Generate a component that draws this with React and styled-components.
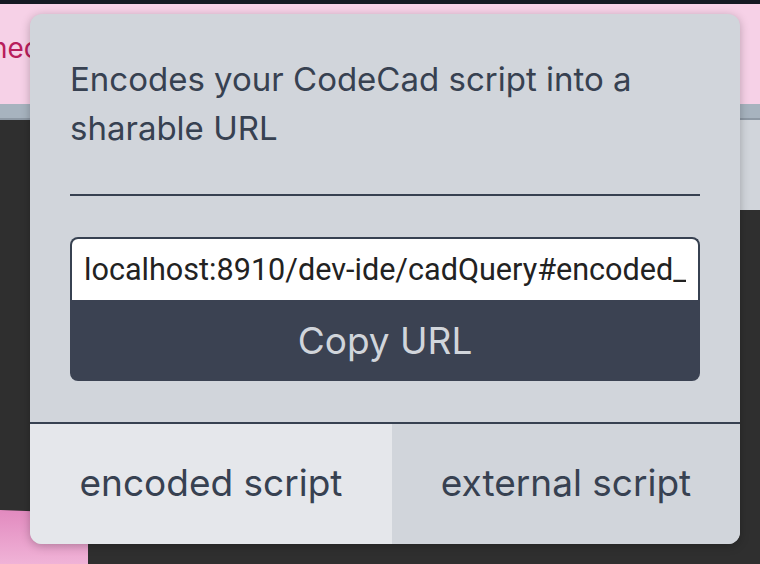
import styled, { createGlobalStyle } from "styled-components";

const GlobalStyle = createGlobalStyle`
  html, body {
    margin: 0;
    padding: 0;
    background: #2f2f2f;
  }
  * {
    box-sizing: border-box;
  }
`;

const Page = styled.div`
  width: 760px;
  height: 564px;
  position: relative;
  overflow: hidden;
  display: flex;
  flex-direction: column;
  background: #2f2f2f;
  font-family: Inter, "Noto Sans", sans-serif;
`;

const TopStrip = styled.div`
  height: 4px;
  background: #141923;
`;

const Header = styled.div`
  height: 100px;
  background: #f6d1e7;
  display: flex;
  align-items: center;
  overflow: hidden;
`;

const HeaderTitle = styled.h1`
  margin: 0 0 12px -9px;
  font-size: 28px;
  font-weight: 400;
  color: #b91d5c;
  white-space: nowrap;
`;

const Toolbar = styled.div`
  height: 16px;
  background: #a7b3bf;
  border-bottom: 2px solid #8d98a4;
`;

const Main = styled.div`
  flex: 1;
  position: relative;
  display: flex;
  justify-content: flex-end;
  align-items: flex-start;
`;

const SidePanel = styled.div`
  width: 60px;
  height: 90px;
  background: #d1d5db;
  display: flex;
  flex-direction: column;
  align-items: flex-start;
  padding: 18px 0 0 35px;
  gap: 16px;
`;

const Dot = styled.span`
  width: 5px;
  height: 6px;
  border-radius: 50%;
  background: #6b7280;
`;

const Blob = styled.div`
  position: absolute;
  left: 0;
  bottom: 0;
  width: 88px;
  height: 54px;
  background: linear-gradient(180deg, #e28abf 0%, #f0b3d7 100%);
  clip-path: polygon(0 0, 60% 2px, 100% 5px, 100% 100%, 0 100%);
`;

const Popover = styled.div`
  position: absolute;
  left: 30px;
  top: 14px;
  width: 710px;
  height: 530px;
  background: #d1d5db;
  border-radius: 12px;
  overflow: hidden;
  box-shadow: 0 2px 10px rgba(0, 0, 0, 0.25);
  display: flex;
  flex-direction: column;
  color: #374151;
`;

const Body = styled.div`
  padding: 41px 40px;
  display: flex;
  flex-direction: column;
  gap: 41px;
  border-bottom: 2px solid #374151;
`;

const Description = styled.p`
  margin: 0;
  font-size: 33px;
  line-height: 49px;
  height: 98px;
`;

const Rule = styled.hr`
  margin: 0;
  border: none;
  height: 2px;
  background: #374151;
`;

const UrlGroup = styled.div`
  display: flex;
  flex-direction: column;
`;

const UrlInput = styled.input`
  height: 63px;
  margin: 0;
  padding: 0 12px 0 12px;
  border: 2px solid #374151;
  border-bottom: none;
  border-radius: 8px 8px 0 0;
  background: #fff;
  font-family: Roboto, "Noto Sans", sans-serif;
  font-size: 30.6px;
  color: #222;
  outline: none;
`;

const CopyButton = styled.button`
  height: 81px;
  margin: 0;
  border: none;
  border-radius: 0 0 8px 8px;
  background: #3b4252;
  color: #d1d5db;
  font-family: Inter, "Noto Sans", sans-serif;
  font-size: 37px;
  cursor: pointer;
`;

const Tabs = styled.div`
  flex: 1;
  display: flex;
`;

const Tab = styled.button`
  flex: 1 1 auto;
  margin: 0;
  border: none;
  padding: 0 0 4px;
  background: ${(p) => (p.$active ? "#e5e7eb" : "#d1d5db")};
  color: #374151;
  font-family: Inter, "Noto Sans", sans-serif;
  font-size: 37px;
  cursor: pointer;
`;

export default function App() {
  return (
    <>
      <GlobalStyle />
      <Page>
        <TopStrip />
        <Header>
          <HeaderTitle>necessary</HeaderTitle>
        </Header>
        <Toolbar />
        <Main>
          <SidePanel>
            <Dot />
            <Dot />
            <Dot />
          </SidePanel>
          <Blob />
        </Main>
        <Popover>
          <Body>
            <Description>Encodes your CodeCad script into a sharable URL</Description>
            <Rule />
            <UrlGroup>
              <UrlInput
                readOnly
                value="localhost:8910/dev-ide/cadQuery#encoded_script=eJyNkMFqwzAMhu9+ChNTqVcyjRrg=="
              />
              <CopyButton>Copy URL</CopyButton>
            </UrlGroup>
          </Body>
          <Tabs>
            <Tab $active style={{ flexBasis: 362 }}>encoded script</Tab>
            <Tab style={{ flexBasis: 348 }}>external script</Tab>
          </Tabs>
        </Popover>
      </Page>
    </>
  );
}
